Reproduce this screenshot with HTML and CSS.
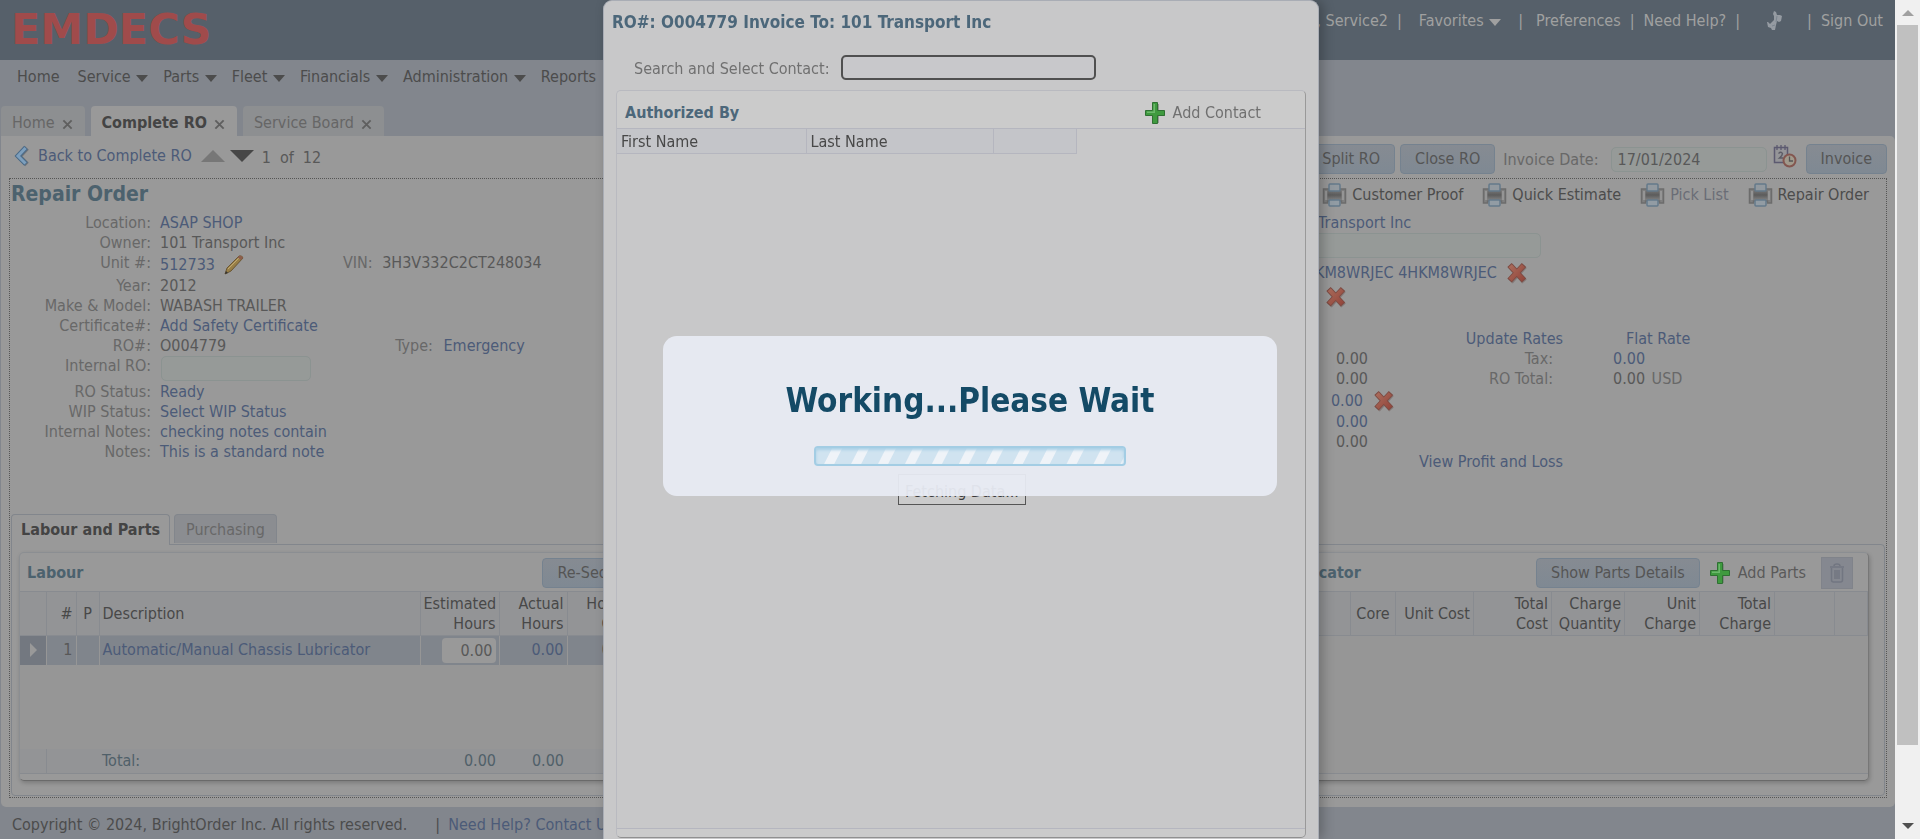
FILE: index.html
```
<!DOCTYPE html>
<html lang="en">
<head>
<meta charset="utf-8">
<title>EMDECS - Complete RO</title>
<link rel="stylesheet" href="styles.css">
</head>
<body>
<svg class="defs" aria-hidden="true">
  <defs>
    <linearGradient id="redGrad" x1="0" y1="0" x2="1" y2="1"><stop offset="0" stop-color="#a96a5a"/><stop offset="1" stop-color="#94473c"/></linearGradient>
    <linearGradient id="paperGrad" x1="0" y1="0" x2="0" y2="1"><stop offset="0" stop-color="#777"/><stop offset="0.5" stop-color="#5c5c5c"/><stop offset="1" stop-color="#808080"/></linearGradient>
    <linearGradient id="pencilGrad" x1="0" y1="0" x2="1" y2="1"><stop offset="0" stop-color="#b59a5c"/><stop offset="1" stop-color="#7c6430"/></linearGradient>
  </defs>
  <symbol id="i-print" viewBox="0 0 24 24">
    <path d="M1 6h22v14h-4v-2H5v2H1z" fill="#808080" stroke="#6c6c6c" stroke-width="1.500"/>
    <path d="M2.500 8h2v9h-2zM19.500 8h2v9h-2z" fill="#959595"/>
    <rect x="5" y="7" width="14" height="10" fill="url(#paperGrad)"/>
    <rect x="6.500" y="1" width="11" height="7" rx="1" fill="#92999f" stroke="#64798a" stroke-width="1.500"/>
    <rect x="6.500" y="17" width="11" height="6" rx="1" fill="#929ca4" stroke="#64798a" stroke-width="1.500"/>
  </symbol>
  <symbol id="i-x" viewBox="0 0 22 22">
    <path d="M4.500 4 18.500 19.500M18.500 4 4.500 19.500" stroke="#6f5a56" stroke-width="6" opacity=".5"/>
    <path d="M3.500 3 18 18.500M18 3 3.500 18.500" stroke="#7d4a42" stroke-width="6"/>
    <path d="M4.200 3.700 17.300 17.800M17.300 3.700 4.200 17.800" stroke="url(#redGrad)" stroke-width="4.200"/>
  </symbol>
  <symbol id="i-plus" viewBox="0 0 22 24">
    <path d="M9 3h6v7h6v5h-6v7H9v-7H2v-5h7z" fill="#6c7a6c" opacity=".6"/>
    <path d="M8.500 1.500h5v8h7v5h-7v8h-5v-8h-7v-5h7z" fill="#3f9a3f" stroke="#2f7033"/>
    <path d="M9.500 3v7.500H3v1.500h8V3z" fill="#6cb86c"/>
  </symbol>
  <symbol id="i-close" viewBox="0 0 12 12"><path d="M1.500 1.500l9 9M10.500 1.500l-9 9" stroke="currentColor" stroke-width="2"/></symbol>
</svg>

<div class="shell">
<div class="app">
  <header class="top">
    <div class="logo">EMDECS</div>
    <div class="userbar">
      <span>BrightOrder, Service2</span><span class="sep">|</span>
      <a href="#" class="fav">Favorites <i class="caret"></i></a><span class="sep wide">|</span>
      <a href="#">Preferences</a><span class="sep">|</span>
      <a href="#">Need Help?</a><span class="sep">|</span>
      <svg class="pin" viewBox="0 0 18 20"><path d="M8 0l2 1 1 3h3l2 1-1 5-2 1-2-1-1 4-1 5H6l-1-2-3-1-1-5h1l2 2 4-4V5L7 3z" fill="#959ba2"/><path d="M11 5l-1 6M6 15l3-1" stroke="#7b858f"/></svg>
      <span class="sep">|</span><a href="#">Sign Out</a>
    </div>
  </header>

  <div class="navband">
    <nav class="menu">
      <a href="#">Home</a>
      <a href="#">Service <i class="caret"></i></a>
      <a href="#">Parts <i class="caret"></i></a>
      <a href="#">Fleet <i class="caret"></i></a>
      <a href="#">Financials <i class="caret"></i></a>
      <a href="#">Administration <i class="caret"></i></a>
      <a href="#">Reports</a>
    </nav>
    <div class="tabs">
      <a href="#" class="tab">Home <svg class="close"><use href="#i-close"/></svg></a>
      <a href="#" class="tab active">Complete RO <svg class="close"><use href="#i-close"/></svg></a>
      <a href="#" class="tab">Service Board <svg class="close"><use href="#i-close"/></svg></a>
    </div>
  </div>

  <main class="page">
    <div class="toolbar">
      <div class="pager">
        <svg class="backicon" viewBox="0 0 18 22"><path d="M14 3 6 11.500l8 8" fill="none" stroke="#6f747a" stroke-width="5"/><path d="M13 2.500 5 11l8 8" fill="none" stroke="#4a6a88" stroke-width="5"/><path d="M12.500 3 5 11l7.500 7.500" fill="none" stroke="#7d9fbd" stroke-width="3"/></svg>
        <a href="#" class="backlink">Back to Complete RO</a>
        <i class="tri up"></i><i class="tri down"></i>
        <span class="count"><span>1</span><span>of</span><span>12</span></span>
      </div>
      <div class="actions">
        <button type="button" class="btn">Split RO</button>
        <button type="button" class="btn">Close RO</button>
        <label for="invdate">Invoice Date:</label>
        <input id="invdate" class="field date" type="text" value="17/01/2024">
        <svg class="calicon" viewBox="0 0 24 24"><path d="M1.500 3.500h13v15h-13z" fill="#959598" stroke="#5c5a70" stroke-width="1.500"/><path d="M4 1v5M8 1v5M12 1v5" stroke="#5c5a70" stroke-width="1.300"/><path d="M5.500 9.500q2.500-2.500 4 0 0 2-3 4.500h3.500" fill="none" stroke="#5c5c66" stroke-width="1.400"/><circle cx="16.500" cy="16.500" r="6" fill="#a19a8c" stroke="#83564f" stroke-width="2"/><path d="M16.500 12.500v4.500h3.500" fill="none" stroke="#555" stroke-width="1.300"/></svg>
        <button type="button" class="btn">Invoice</button>
      </div>
    </div>

    <section class="order">
      <div class="summary">
        <div class="details">
          <h1>Repair Order</h1>
          <dl class="info">
            <dt>Location:</dt><dd><a href="#">ASAP SHOP</a></dd>
            <dt>Owner:</dt><dd>101 Transport Inc</dd>
            <dt>Unit #:</dt><dd class="unit"><a href="#">512733</a>
              <svg class="pencil" viewBox="0 0 22 22"><path d="M2 20 4 14 16 2q3-1 4 2L8 17z" fill="url(#pencilGrad)" stroke="#6a5634"/><path d="M5 15 17 3" stroke="#c0a872"/><path d="M16 2q3-1 4 2l-2 2-3.500-2.500z" fill="#8c5e4c"/><path d="M2 20l1-3 2 2z" fill="#333"/></svg>
              <span class="vin"><span class="lbl">VIN:</span> 3H3V332C2CT248034</span></dd>
            <dt>Year:</dt><dd>2012</dd>
            <dt>Make &amp; Model:</dt><dd>WABASH TRAILER</dd>
            <dt>Certificate#:</dt><dd><a href="#">Add Safety Certificate</a></dd>
            <dt>RO#:</dt><dd class="ronum"><span>O004779</span><span class="type"><span class="lbl">Type:</span> <a href="#">Emergency</a></span></dd>
            <dt><label for="introw">Internal RO:</label></dt><dd class="introw"><input id="introw" class="field" type="text"></dd>
            <dt>RO Status:</dt><dd><a href="#">Ready</a></dd>
            <dt>WIP Status:</dt><dd><a href="#">Select WIP Status</a></dd>
            <dt>Internal Notes:</dt><dd><a href="#">checking notes contain</a></dd>
            <dt>Notes:</dt><dd><a href="#">This is a standard note</a></dd>
          </dl>
        </div>

        <div class="billing">
          <div class="prints">
            <a href="#"><svg><use href="#i-print"/></svg>Customer Proof</a>
            <a href="#"><svg><use href="#i-print"/></svg>Quick Estimate</a>
            <a href="#" class="dim"><svg><use href="#i-print"/></svg>Pick List</a>
            <a href="#"><svg><use href="#i-print"/></svg>Repair Order</a>
          </div>
          <div class="customer">
            <a href="#">101 Transport Inc</a>
            <input class="field" type="text" aria-label="Customer reference">
            <div class="vinrow"><a href="#">4HKM8WRJEC 4HKM8WRJEC</a><svg class="del"><use href="#i-x"/></svg></div>
            <div class="clearrow"><svg class="del"><use href="#i-x"/></svg></div>
          </div>
          <div class="totals">
            <span></span><a href="#">Update Rates</a><a href="#" class="flat">Flat Rate</a>
            <span>0.00</span><span class="lbl">Tax:</span><a href="#" class="amt">0.00</a>
            <span>0.00</span><span class="lbl">RO Total:</span><span class="amt">0.00 <span class="cur">USD</span></span>
            <a href="#" class="inset">0.00</a><svg class="del"><use href="#i-x"/></svg><span></span>
            <a href="#">0.00</a><span></span><span></span>
            <span>0.00</span><span></span><span></span>
            <span></span><a href="#">View Profit and Loss</a><span></span>
          </div>
        </div>
      </div>

      <div class="subtabs">
        <a href="#" class="subtab active">Labour and Parts</a>
        <a href="#" class="subtab">Purchasing</a>
      </div>

      <div class="cards">
        <section class="card labour">
          <div class="cardhead"><h2>Labour</h2><button type="button" class="btn">Re-Sequence</button></div>
          <table>
            <colgroup><col class="w26"><col class="w30"><col class="w23"><col class="w321"><col class="w79"><col class="w68"><col class="w70"><col></colgroup>
            <thead><tr><th></th><th class="n">#</th><th class="c">P</th><th>Description</th><th class="n">Estimated Hours</th><th class="n">Actual Hours</th><th class="n">Hourly Cost</th><th></th></tr></thead>
            <tbody>
              <tr class="sel"><td class="mark"><i></i></td><td class="n">1</td><td></td><td><a href="#">Automatic/Manual Chassis Lubricator</a></td><td class="n ed"><input type="text" aria-label="Estimated hours" value="0.00"></td><td class="n"><a href="#">0.00</a></td><td class="n">0.00</td><td></td></tr>
              <tr class="blank"><td colspan="8"></td></tr>
            </tbody>
            <tfoot><tr><td class="first"></td><td></td><td></td><td>Total:</td><td class="n">0.00</td><td class="n">0.00</td><td></td><td></td></tr></tfoot>
          </table>
        </section>
        <section class="card parts">
          <div class="cardhead">
            <h2>Parts: Automatic/Manual Chassis Lubricator</h2>
            <div class="partacts">
              <button type="button" class="btn">Show Parts Details</button>
              <a href="#" class="add"><svg><use href="#i-plus"/></svg>Add Parts</a>
              <button type="button" class="trash" aria-label="Delete"><svg viewBox="0 0 16 20"><path d="M1 4h14M5 3q0-2 3-2t3 2M2.500 5v12q0 2 2 2h7q2 0 2-2V5M6 7v9M8 7v9M10 7v9" fill="none" stroke="#727681" stroke-width="1.500"/></svg></button>
            </div>
          </div>
          <table>
            <colgroup><col><col class="w45"><col class="w78"><col class="w78"><col class="w73"><col class="w75"><col class="w75"><col class="w60"><col class="w33"></colgroup>
            <thead><tr><th></th><th class="c">Core</th><th class="n">Unit Cost</th><th class="n tc">Total Cost</th><th class="n">Charge Quantity</th><th class="n">Unit Charge</th><th class="n">Total Charge</th><th></th><th></th></tr></thead>
            <tbody><tr class="blank"><td colspan="9"></td></tr></tbody>
          </table>
        </section>
      </div>
    </section>
  </main>

  <footer class="foot"><span>Copyright © 2024, BrightOrder Inc. All rights reserved.</span><span class="bar">|</span><a href="#">Need Help? Contact Us</a></footer>
</div>

<div class="scroll" aria-hidden="true"><i class="arr up"></i><div class="thumb"></div><i class="arr down"></i></div>
</div>

<div class="modal" role="dialog" aria-label="Invoice">
  <h2 class="mtitle">RO#: O004779 Invoice To: 101 Transport Inc</h2>
  <div class="search"><label for="contact">Search and Select Contact:</label><input id="contact" type="text"></div>
  <section class="mcard">
    <div class="mhead"><h3>Authorized By</h3><a href="#" class="add"><svg><use href="#i-plus"/></svg>Add Contact</a></div>
    <div class="mbody">
      <table><thead><tr><th class="w189">First Name</th><th class="w187">Last Name</th><th class="w83"></th></tr></thead></table>
    </div>
  </section>
</div>

<div class="fetching">Fetching Data...</div>
<div class="working" role="status">
  <p>Working...Please Wait</p>
  <div class="progress"></div>
</div>
</body>
</html>
```
FILE: styles.css
```
* { box-sizing: border-box; }
html, body { height: 100%; overflow: hidden; }
body {
  margin: 0;
  font: 16px/20px "DejaVu Sans Condensed", "DejaVu Sans", sans-serif;
  color: #585858;
  background: #f0f0f0;
}
a { color: #4c5b78; text-decoration: none; }
h1, h2, h3, p, dl, dd { margin: 0; }
h2, h3 { font-size: 16px; line-height: 20px; font-weight: bold; color: #4c626e; }
input, button { font: inherit; color: inherit; margin: 0; }
.defs { position: absolute; width: 0; height: 0; }

.shell { display: flex; height: 100vh; }
.app { flex: 1; min-width: 0; display: flex; flex-direction: column; background: #82868d; }

/* header */
.top { height: 60px; display: flex; justify-content: space-between; padding: 11px 12px 0 11px; background: #56606a; }
.logo { font: bold 43px/36px "DejaVu Sans", sans-serif; color: #a04b4b; }
.userbar { display: flex; align-items: flex-start; gap: 9px; color: #a0a0a0; white-space: nowrap; }
.userbar a { color: #a0a0a0; }
.fav { margin-left: 8px; }
.wide { margin: 0 4px 0 8px; }
.pin { width: 18px; height: 20px; margin: 0 14px 0 17px; }
.caret { display: inline-block; border: 6px solid transparent; border-top: 7px solid currentColor; border-bottom: 0; margin-left: 1px; vertical-align: 0; }

/* navigation */
.navband { display: flex; flex-direction: column; justify-content: space-between; height: 76px; padding-top: 7px; }
.menu { display: flex; gap: 15px; padding-left: 17px; }
.menu a { color: #4c4c4c; }
.menu a:first-child { margin-right: 3px; }
.tabs { display: flex; gap: 6px; padding-left: 1px; align-items: flex-end; }
.tab { display: flex; align-items: center; gap: 7px; height: 30px; padding: 4px 12px 0 11px; color: #666; background: #8d8f91; border-radius: 4px 4px 0 0; }
.tab.active { background: #999; color: #444; font-weight: bold; }
.close { width: 11px; height: 11px; margin-top: 3px; color: #5f5f5f; }

/* page */
.page { flex: 1; min-height: 0; display: flex; flex-direction: column; margin-left: 1px; padding: 0 8px 9px; background: #999; border-radius: 0 5px 5px 5px; }
.toolbar { display: flex; justify-content: space-between; height: 42px; }
.pager { display: flex; align-items: center; padding: 0 0 2px 4px; }
.backicon { width: 18px; height: 22px; margin-right: 7px; }
.tri { border: 12px solid transparent; margin-left: 9px; }
.tri.up { border-top: 0; border-bottom-color: #777; }
.tri.down { border-bottom: 0; border-top-color: #474747; margin-left: 5px; }
.count { display: flex; gap: 9px; margin: 4px 0 0 8px; }
.actions { display: flex; align-items: center; padding-top: 4px; }
.actions label { margin: 2px 12px 0 8px; color: #686868; }
.btn { height: 30px; padding: 0 14px; border: 1px solid #75828f; border-radius: 4px; color: #555; background: linear-gradient(#868b92, #7f8993); white-space: nowrap; }
.actions .btn + .btn { margin-left: 5px; }
.field { height: 25px; border: 1px solid #8b9391; border-radius: 5px; padding: 0 6px; background: #969a98; }
.date { width: 156px; }
.calicon { width: 24px; height: 24px; margin: 0 9px 6px 6px; }

.order { flex: 1; display: flex; flex-direction: column; border: 1px dotted #555; }
.summary { display: flex; flex: 1; }
.details { flex: 1; }
h1 { font-size: 21px; line-height: 30px; height: 34px; padding-left: 1px; color: #4c626e; }
.info { display: grid; grid-template-columns: 141px 1fr; column-gap: 9px; }
.info dt { text-align: right; color: #686868; }
.lbl { color: #686868; }
.unit { display: flex; align-items: center; height: 23px; }
.pencil { width: 22px; height: 22px; margin-left: 8px; }
.vin { margin: -3px 0 0 98px; }
.vin .lbl { margin-right: 5px; }
.ronum { display: flex; }
.type { margin-left: 169px; }
.type .lbl { margin-right: 6px; }
.introw { height: 26px; }
.introw .field { display: block; width: 150px; margin-left: 1px; }

.billing { width: 640px; }
.prints { display: flex; justify-content: flex-end; gap: 19px; height: 34px; padding: 4px 17px 0 0; }
.prints a { display: flex; align-items: center; gap: 5px; height: 24px; color: #4c4c4c; }
.prints a.dim { color: #6a6d76; }
.prints svg { width: 25px; height: 24px; }
.customer { display: flex; flex-direction: column; align-items: flex-start; height: 116px; padding-left: 40px; }
.customer .field { width: 255px; }
.del { width: 22px; height: 22px; }
.vinrow { display: flex; align-items: center; gap: 9px; margin: 4px 0 2px 9px; }
.clearrow { padding-left: 39px; height: 22px; }
.totals { display: grid; grid-template-columns: 122px 195px 1fr; grid-template-rows: 20px 20px 20px 23px 20px 20px 20px; align-items: center; justify-items: end; }
.totals > .lbl { padding-right: 10px; }
.totals > :nth-child(3n) { justify-self: start; }
.totals .flat { padding-left: 63px; }
.totals .amt { padding-left: 50px; }
.cur { margin-left: 2px; color: #686868; }
.totals .inset { padding-right: 5px; }
.totals .del { justify-self: start; margin-left: 5px; }

.subtabs { display: flex; gap: 4px; margin-left: 1px; height: 30px; }
.subtab { height: 29px; padding: 5px 11px; color: #686868; background: #8b8d91; border: 1px solid #82868c; border-bottom: 0; border-radius: 4px 4px 0 0; }
.subtab:first-child { padding: 5px 9px; }
.subtab.active { height: 31px; background: #999; color: #444; font-weight: bold; z-index: 1; }
.cards { display: flex; gap: 14px; margin: 0 1px 1px; padding: 7px 15px 14px 7px; border: 1px solid #82868c; border-radius: 0 4px 4px 4px; }
.card { display: flex; flex-direction: column; min-width: 0; padding-bottom: 6px; border: 1px solid #8b8e92; border-bottom-color: #6a6a6a; border-radius: 5px; box-shadow: 1px 2px 4px rgba(0,0,0,.2); }
.labour { width: 920px; }
.parts { flex: 1; border-right-color: #777; }
.cardhead { display: flex; justify-content: space-between; align-items: center; height: 38px; padding: 2px 27px 0 7px; }
.labour .cardhead { justify-content: flex-start; gap: 459px; }
.partacts { display: flex; align-items: center; gap: 9px; }
.add { display: flex; align-items: center; gap: 7px; color: #5a5a5a; white-space: nowrap; }
.add svg { width: 22px; height: 24px; }
.parts .cardhead { padding-left: 51px; padding-right: 15px; white-space: nowrap; }
.trash { display: flex; align-items: center; justify-content: center; width: 32px; height: 32px; margin-left: 6px; padding: 0; background: #858890; border: 1px solid #80838a; }
.trash svg { width: 16px; height: 20px; }

.card table { width: 100%; flex: 1; table-layout: fixed; border-collapse: collapse; background: #969696; border-bottom: 1px solid #888b90; }
th { font-weight: normal; text-align: left; color: #484848; padding: 0 3px; }
.card th { height: 44px; border: 1px solid #888b90; border-left: 0; background: #939496; }
.card td { padding: 0 3px; }
.card .n { text-align: right; }
.card .c { text-align: center; }
.card .tc { padding-left: 22px; }
.w23 { width: 23px; } .w26 { width: 26px; } .w30 { width: 30px; } .w33 { width: 33px; } .w45 { width: 45px; }
.w60 { width: 60px; } .w68 { width: 68px; } .w70 { width: 70px; } .w73 { width: 73px; } .w75 { width: 75px; }
.w78 { width: 78px; } .w79 { width: 79px; } .w321 { width: 321px; }
.sel td { height: 29px; background: #80858c; border-right: 1px solid #969696; }
.sel .mark { background: #737880; padding-left: 10px; }
.mark i { display: block; width: 0; border: 7px solid transparent; border-left-color: #999; border-right: 0; }
.ed input { display: block; width: 54px; height: 25px; margin-left: auto; padding: 0 3px; text-align: right; border: 0; border-radius: 4px; background: #999; }
.blank td { height: auto; }
.labour .blank td { height: 84px; }
.card tfoot td { height: 25px; background: #939496; color: #506069; }
.card tfoot .first { border-right: 1px solid #888b90; }

.foot { height: 32px; display: flex; align-items: center; padding: 4px 12px 0; color: #4c4c4c; }
.bar { margin: 0 8px 0 28px; }

/* scroll track */
.scroll { width: 25px; display: flex; flex-direction: column; align-items: center; justify-content: space-between; padding: 10px 0; }
.thumb { width: 21px; flex: 1; margin: 9px 0 78px; background: #c0c0c0; }
.arr { border: 6px solid transparent; }
.arr.up { border-top: 0; border-bottom-color: #a0a0a0; }
.arr.down { border-bottom: 0; border-top-color: #505050; }

/* invoice dialog */
.modal { position: fixed; top: 0; bottom: 0; left: calc(50% - 357px); width: 716px; display: flex; flex-direction: column; padding: 11px 12px 1px; background: #c8c8c9; border: 1px solid #a9adb5; border-bottom: 0; border-radius: 9px 9px 0 0; box-shadow: 4px 0 12px rgba(0,0,0,.25); }
.mtitle { margin-left: -4px; font-size: 17px; color: #4c677a; }
.search { display: flex; align-items: center; gap: 12px; margin: 23px 0 10px 18px; }
.search label { padding-top: 2px; color: #707070; }
.search input { width: 255px; height: 25px; border: 2px solid #505050; border-radius: 5px; background: #c8c8cb; }
.mcard { flex: 1; display: flex; flex-direction: column; padding-bottom: 8px; border: 1px solid #b9bac0; border-right-color: #999; border-bottom-color: #909090; border-radius: 5px; background: #cbcbcb; }
.mhead { display: flex; justify-content: space-between; align-items: center; height: 37px; padding: 7px 44px 0 8px; }
.mhead h3 { color: #4c677a; }
.mhead .add { color: #707070; }
.mbody { flex: 1; background: #c8c8c9; border: 1px solid #b5b6bf; border-width: 1px 0; }
.mbody table { border-collapse: collapse; }
.mbody th { height: 24px; padding: 2px 4px 0; border: 1px solid #b5b6bf; border-width: 0 1px 1px 0; background: #c4c5c9; }
.w189 { width: 189px; } .w187 { width: 187px; } .w83 { width: 83px; }

/* busy indicator */
.fetching { position: fixed; top: 474px; left: calc(50% - 62px); width: 128px; padding: 8px 6px 3px; border: 1px solid #555; background: #cbcbcb; color: #3c3c3c; line-height: 18px; text-align: center; white-space: nowrap; }
.working { position: fixed; top: 336px; left: calc(50% - 297px); width: 614px; height: 160px; display: flex; flex-direction: column; align-items: center; gap: 25px; padding-top: 45px; border-radius: 14px; background: rgba(232,235,243,.95); }
.working p { font-size: 33px; line-height: 40px; font-weight: bold; color: #144a66; }
.progress { width: 312px; height: 20px; border: 2px solid #a3cde4; border-radius: 4px; background: repeating-linear-gradient(117deg, #d0e3f0 0 14px, #eff3f8 15px 23px, #d0e3f0 24px); box-shadow: inset 0 2px 3px #a9d0e6; }
```
